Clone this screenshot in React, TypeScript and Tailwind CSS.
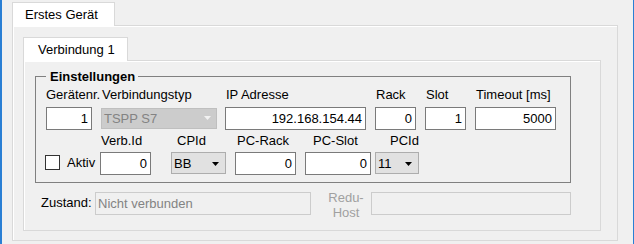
import React from 'react';

const Arrow: React.FC<{ color: string }> = ({ color }) => (
  <svg width="7" height="4" viewBox="0 0 7 4" className="block">
    <path d="M0 0H7L3.5 4Z" fill={color} />
  </svg>
);

const TextBox: React.FC<{ value: string; w: string }> = ({ value, w }) => (
  <div className={`${w} h-[23px] bg-white border border-[#7a7a7a] pt-[3px] pr-[3px] text-right whitespace-nowrap`}>
    {value}
  </div>
);

const Combo: React.FC<{ value: string; disabled?: boolean; w: string; h: string }> = ({ value, disabled, w, h }) => (
  <div
    className={`${w} ${h} flex items-start justify-between border pl-[2px] ${
      disabled ? 'bg-[#cccccc] border-[#bfbfbf] text-[#838383] pt-[2px] pr-[5px]' : 'bg-[#e1e1e1] border-[#adadad] pt-[3px] pr-[6px]'
    }`}
  >
    <span>{value}</span>
    <span className={disabled ? 'mt-[5px]' : 'mt-[6px]'}>
      <Arrow color={disabled ? '#f2f2f2' : '#000000'} />
    </span>
  </div>
);

export default function App() {
  return (
    <div className="w-[634px] h-[244px] bg-[#f0f0f0] border-l-2 border-r border-[#2a7fd4] pl-[10px] pt-[2px] font-['Liberation_Sans',Arial,sans-serif] text-[13px] leading-[15px] text-black overflow-hidden">
      {/* Outer tab control */}
      <div className="w-[606px] flex flex-col">
        <div className="relative z-10 w-[103px] h-[24px] -mb-px bg-white border border-b-0 border-[#d9d9d9] pl-[12px] pt-[4px]">
          Erstes Gerät
        </div>
        <div className="h-[216px] border border-[#d9d9d9] shadow-[inset_1px_1px_0_#ffffff] pl-[10px] pt-[11px]">
          {/* Inner tab control */}
          <div className="w-[578px] flex flex-col">
            <div className="relative z-10 w-[105px] h-[24px] -mb-px bg-white border border-b-0 border-[#d9d9d9] pl-[14px] pt-[4px]">
              Verbindung 1
            </div>
            <div className="h-[171px] border border-[#d9d9d9] shadow-[inset_1px_1px_0_#ffffff] pt-[15px]">
              {/* Group box */}
              <div className="relative ml-[11px] w-[536px] h-[107px] border border-[#808080] pt-[10px]">
                <div className="absolute left-[10px] top-[-8px] bg-[#f0f0f0] pl-[4px] pr-[3px] font-bold">
                  Einstellungen
                </div>

                {/* Row 1 */}
                <div className="flex items-start">
                  <div className="ml-[10px] w-[46px] flex flex-col">
                    <span className="whitespace-nowrap">Gerätenr.</span>
                    <div className="mt-[5px]"><TextBox value="1" w="w-[46px]" /></div>
                  </div>
                  <div className="ml-[9px] w-[116px] flex flex-col">
                    <span className="pl-px whitespace-nowrap">Verbindungstyp</span>
                    <div className="mt-[6px]"><Combo value="TSPP S7" disabled w="w-[116px]" h="h-[21px]" /></div>
                  </div>
                  <div className="ml-[8px] w-[141px] flex flex-col">
                    <span className="pl-px">IP Adresse</span>
                    <div className="mt-[5px]"><TextBox value="192.168.154.44" w="w-[141px]" /></div>
                  </div>
                  <div className="ml-[9px] w-[41px] flex flex-col">
                    <span className="pl-px">Rack</span>
                    <div className="mt-[5px]"><TextBox value="0" w="w-[41px]" /></div>
                  </div>
                  <div className="ml-[9px] w-[41px] flex flex-col">
                    <span className="pl-px">Slot</span>
                    <div className="mt-[5px]"><TextBox value="1" w="w-[41px]" /></div>
                  </div>
                  <div className="ml-[9px] w-[81px] flex flex-col">
                    <span className="pl-px whitespace-nowrap">Timeout [ms]</span>
                    <div className="mt-[5px]"><TextBox value="5000" w="w-[81px]" /></div>
                  </div>
                </div>

                {/* Row 2 */}
                <div className="flex items-start mt-[3px]">
                  <div className="ml-[9px] mt-[22px] flex items-start">
                    <div className="w-[15px] h-[15px] bg-white border border-[#333333]" />
                    <span className="ml-[7px] w-[33px]">Aktiv</span>
                  </div>
                  <div className="w-[51px] flex flex-col">
                    <span className="pl-px">Verb.Id</span>
                    <div className="mt-[4px]"><TextBox value="0" w="w-[51px]" /></div>
                  </div>
                  <div className="ml-[20px] w-[55px] flex flex-col">
                    <span className="pl-[6px]">CPId</span>
                    <div className="mt-[4px]"><Combo value="BB" w="w-[55px]" h="h-[22px]" /></div>
                  </div>
                  <div className="ml-[9px] w-[61px] flex flex-col">
                    <span className="pl-[2px] whitespace-nowrap">PC-Rack</span>
                    <div className="mt-[4px]"><TextBox value="0" w="w-[61px]" /></div>
                  </div>
                  <div className="ml-[9px] w-[66px] flex flex-col">
                    <span className="pl-[8px] whitespace-nowrap">PC-Slot</span>
                    <div className="mt-[4px]"><TextBox value="0" w="w-[66px]" /></div>
                  </div>
                  <div className="ml-[4px] w-[44px] flex flex-col">
                    <span className="pl-[15px]">PCId</span>
                    <div className="mt-[4px]"><Combo value="11" w="w-[44px]" h="h-[22px]" /></div>
                  </div>
                </div>
              </div>

              {/* Row 3 */}
              <div className="flex items-start mt-[9px] ml-[17px]">
                <span className="w-[54px] mt-[3px]">Zustand:</span>
                <div className="w-[216px] h-[23px] border border-[#cccccc] bg-[#f0f0f0] pl-[2px] pt-[3px] text-[#838383]">
                  Nicht verbunden
                </div>
                <div className="ml-[16px] w-[38px] mt-[-2px] text-center text-[#a0a0a0]">
                  Redu-
                  <br />
                  Host
                </div>
                <div className="ml-[6px] w-[200px] h-[23px] border border-[#cccccc] bg-[#f0f0f0]" />
              </div>
            </div>
          </div>
        </div>
      </div>
    </div>
  );
}
